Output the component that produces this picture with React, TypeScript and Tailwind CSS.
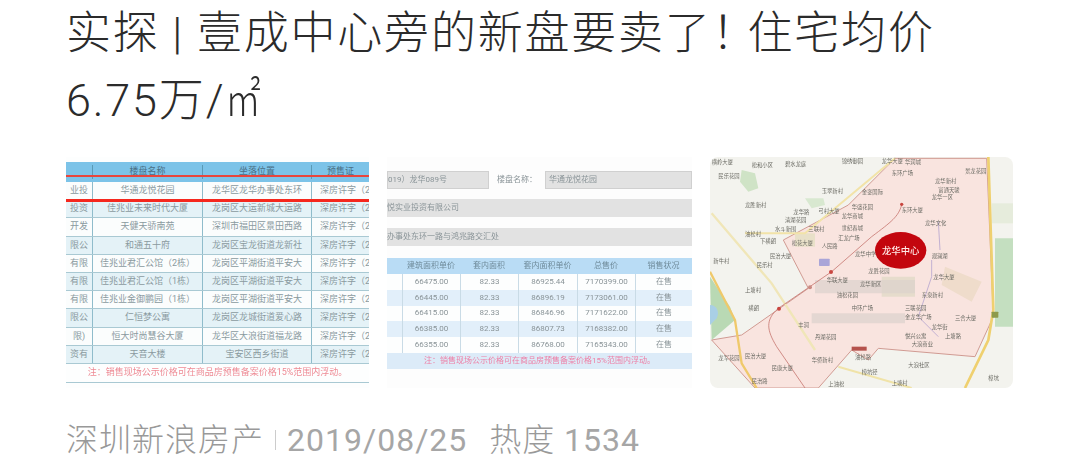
// 資訊カード: タイトル + サムネイル3枚 + メタ行

const SANS = "font-['Roboto','Noto_Sans_CJK_SC',sans-serif]";

const LISTING_ROWS = [
  ["业投", "华通龙悦花园", "龙华区龙华办事处东环"],
  ["投资", "佳兆业未来时代大厦", "龙岗区大运新城大运路"],
  ["开发", "天健天骄南苑", "深圳市福田区景田西路"],
  ["限公", "和通五十府", "龙岗区宝龙街道龙新社"],
  ["有限", "佳兆业君汇公馆（2栋）", "龙岗区平湖街道平安大"],
  ["有限", "佳兆业君汇公馆（1栋）", "龙岗区平湖街道平安大"],
  ["有限", "佳兆业金御鹏园（1栋）", "龙岗区平湖街道平安大"],
  ["限公", "仁恒梦公寓", "龙岗区龙城街道爱心路"],
  ["限)", "恒大时尚慧谷大厦", "龙华区大浪街道福龙路"],
  ["资有", "天音大楼", "宝安区西乡街道"],
];

const PRICE_ROWS = [
  ["66475.00", "82.33", "86925.44", "7170399.00", "在售"],
  ["66445.00", "82.33", "86896.19", "7173061.00", "在售"],
  ["66415.00", "82.33", "86846.96", "7171622.00", "在售"],
  ["66385.00", "82.33", "86807.73", "7168382.00", "在售"],
  ["66355.00", "82.33", "86768.00", "7165343.00", "在售"],
];

const MAP_LABELS: [number, number, string][] = [
  [20, 42, "横岭大厦"], [140, 50, "松和小区"], [240, 48, "碧水龙庭"], [410, 40, "锦绣御园"], [530, 40, "龙华大厦"],
  [600, 42, "华润城"], [560, 75, "东环广场"], [690, 100, "龙华新村"], [780, 68, "景龙花园"], [40, 85, "民乐花园"],
  [700, 125, "富通天骏"], [470, 133, "金銮国际"], [350, 128, "玉翠新村"], [680, 148, "龙华一区"], [120, 170, "龙胜新村"],
  [590, 185, "东环大厦"], [440, 178, "华盛花园"], [265, 192, "龙华路"], [340, 190, "弓村大厦"], [410, 205, "龙华商城"],
  [240, 215, "清湖花园"], [660, 225, "龙华文化"], [410, 240, "世纪春城"], [210, 243, "水斗新围"], [310, 242, "三联村"],
  [120, 258, "油松村"], [400, 270, "汇龙广场"], [165, 280, "下横朗"], [260, 285, "松花大厦"], [350, 295, "人民路"],
  [195, 325, "民治大厦"], [450, 318, "龙华中学"], [680, 323, "观澜湖"], [25, 340, "新牛村"], [155, 350, "民乐村"],
  [490, 368, "龙胜花园"], [685, 388, "龙华大厦"], [365, 397, "华联大厦"], [465, 407, "龙华新区"], [120, 425, "上塘村"],
  [395, 442, "油松花园"], [650, 442, "东泉新村"], [130, 480, "横朗"], [440, 480, "中环广场"], [600, 480, "三联花园"],
  [600, 508, "金龙华广场"], [750, 510, "三合大厦"], [680, 537, "龙华街"], [280, 530, "丰润"], [330, 568, "丹湖花园"],
  [600, 565, "悦兴公寓"], [720, 565, "上塘路"], [620, 588, "大浪商业"], [40, 630, "龙军花园"], [120, 625, "民治大厦"],
  [320, 635, "华侨新村"], [450, 628, "油松路"], [610, 650, "大浪社区"], [200, 660, "民康大厦"], [470, 672, "樟坑径"],
  [140, 700, "民治路"], [370, 708, "上油松"], [560, 705, "上塘村"], [850, 690, "樟坑"],
];

function ListingThumb() {
  return (
    <div className="relative h-[231px] w-[303px] shrink-0 overflow-hidden bg-[#fdfefe] pt-[5px]">
      <div className="blur-[0.7px]">
        <div className="grid h-[20px] grid-cols-[26px_110px_109px_58px] items-center bg-[#7cc3e8] text-center text-[9px] text-[#4a6f85]">
          <span />
          <span className="border-l border-[#5a9ab5]">楼盘名称</span>
          <span className="border-l border-[#5a9ab5]">坐落位置</span>
          <span className="whitespace-nowrap border-l border-[#5a9ab5]">预售证</span>
        </div>
        {LISTING_ROWS.map((row, i) => (
          <div
            key={row[1]}
            className={`grid h-[18.2px] grid-cols-[26px_110px_109px_58px] items-center border-b border-[#a9c9d3] text-center text-[9px] leading-none text-[#8a9a9f] ${i % 2 === 1 ? "bg-[#e4f2f7]" : "bg-[#fbfdfd]"}`}
          >
            <span className="whitespace-nowrap">{row[0]}</span>
            <span className="h-full whitespace-nowrap border-l border-[#8fbccb] pt-[4px]">{row[1]}</span>
            <span className="h-full whitespace-nowrap border-l border-[#8fbccb] pt-[4px]">{row[2]}</span>
            <span className="h-full overflow-hidden whitespace-nowrap border-l border-[#8fbccb] pt-[4px] pl-[8px] text-left">深房许字（2</span>
          </div>
        ))}
        <div className="flex h-[19px] items-center justify-center border-b border-[#a9c9d3] text-[9px] text-[#ee8a94]">
          注：销售现场公示价格可在商品房预售备案价格15%范围内浮动。
        </div>
      </div>
      <div className="absolute inset-x-0 top-[18px] h-[2px] bg-[#e8453c] blur-[0.4px]" />
      <div className="absolute inset-x-0 top-[42px] h-[3px] bg-[#f5281e] blur-[0.3px]" />
    </div>
  );
}

function PriceThumb() {
  return (
    <div className="h-[231px] w-[305px] shrink-0 overflow-hidden bg-[#fdfdfd] pt-[14px] text-[8px] text-[#8a9498]">
      <div className="blur-[0.7px]">
        <div className="flex h-[18px] items-center">
          <div className="flex h-full w-[102px] items-center border border-[#d0d0d0] bg-[#e2e2e2]">019）龙华089号</div>
          <div className="w-[56px] text-center">楼盘名称：</div>
          <div className="flex h-full flex-1 items-center border border-[#d0d0d0] bg-[#e2e2e2] pl-[3px]">华通龙悦花园</div>
        </div>
        <div className="mt-[10px] flex h-[18px] items-center bg-[#e2e2e2]">悦实业投资有限公司</div>
        <div className="mt-[11px] flex h-[18px] items-center bg-[#e2e2e2]">办事处东环一路与鸿兆路交汇处</div>
        <div className="mt-[12px] grid h-[16px] grid-cols-[15px_58px_58px_59px_58px_57px] items-center bg-[#b9dcf5] text-center text-[#6f8b9a]">
          <span />
          <span>建筑面积单价</span>
          <span>套内面积</span>
          <span>套内面积单价</span>
          <span>总售价</span>
          <span>销售状况</span>
        </div>
        {PRICE_ROWS.map((row, i) => (
          <div
            key={row[0]}
            className={`grid h-[15.8px] grid-cols-[15px_58px_58px_59px_58px_57px] items-center text-center ${i % 2 === 1 ? "bg-[#e2effa]" : "bg-[#fdfefe]"}`}
          >
            <span />
            {row.map((cell, j) => (
              <span key={j} className="flex h-full items-center justify-center border-l border-[#c9dbe6]">{cell}</span>
            ))}
          </div>
        ))}
        <div className="flex h-[16px] items-center justify-center bg-[#dcebf8] text-[#ee7fa5]">
          注：销售现场公示价格可在商品房预售备案价格15%范围内浮动。
        </div>
      </div>
    </div>
  );
}

function MapThumb() {
  return (
    <div className="h-[231px] w-[303px] shrink-0 overflow-hidden rounded-lg bg-[#f3f3ee]">
      <svg viewBox="15 21 909 693" className="block h-full w-full blur-[0.7px]">
        {/* 緑地と水面 */}
        <path d="M110 60l40 10 10 45-30 10-25-30z" fill="#cfe3c6" />
        <path d="M300 145h55l5 20-40 10z" fill="#d8e8d0" />
        <path d="M15 380l60 90 15 40-70 60z" fill="#b9d9b4" />
        <path d="M15 465c20 0 30 20 20 40l-20 20z" fill="#a9cfe6" />
        <path d="M870 265h55v265h-55z" fill="#c4dfc0" />
        <path d="M860 160h64v60h-64z" fill="#e6ecdc" />
        <path d="M780 70h50l-10 40-30 5z" fill="#dfe4c8" />
        {/* 対象エリア */}
        <path
          d="M20 570L110 555L310 415L235 270L430 165L570 25L845 25L865 500L810 620L520 595L490 630L440 600L340 714L150 714Z"
          fill="#f9e4df"
          stroke="#d09a92"
          strokeWidth="3"
        />
        <path d="M270 250h60v40h-60z" fill="#e8e0c8" />
        <path d="M720 350l110 45-30 60-90-50z" fill="#efdccb" />
        <path d="M530 380h100v60h-100z" fill="#e6dccc" />
        {/* 透かし */}
        <path d="M330 390h300v40h-300zM320 490h280v30h-280z" fill="#dcd2cc" opacity="0.7" />
        {/* 道路 */}
        <path d="M850 21L865 480L850 570L780 714" fill="none" stroke="#efd06f" strokeWidth="8" />
        <path d="M15 365L90 510L110 640L155 714" fill="none" stroke="#efc96b" strokeWidth="7" />
        <path d="M20 190L200 400L330 600" fill="none" stroke="#f0e6b8" strokeWidth="7" />
        <path d="M120 250H300L570 25" fill="none" stroke="#f2e3a8" strokeWidth="6" />
        <path d="M400 650L620 714" fill="none" stroke="#f0e3a8" strokeWidth="6" />
        {/* 地下鉄 */}
        <path
          d="M590 165C580 200 560 215 500 260L380 365L220 475C180 510 185 540 215 590L300 714"
          fill="none"
          stroke="#c87a74"
          strokeWidth="2.5"
        />
        <path d="M700 215L705 300M680 330L680 380L640 500L700 560" fill="none" stroke="#b7a6cf" strokeWidth="2.5" />
        <rect x="342" y="326" width="32" height="22" rx="2" fill="#aaa5d8" />
        <circle cx="378" cy="366" r="6" fill="#c9453f" />
        <circle cx="222" cy="476" r="6" fill="#c9453f" />
        <circle cx="590" cy="163" r="5" fill="#c9453f" />
        <circle cx="315" cy="412" r="6" fill="#c98a82" />
        <rect x="440" y="590" width="45" height="12" fill="#b5524c" />
        <rect x="860" y="485" width="20" height="18" rx="2" fill="#8d9a4a" />
        {MAP_LABELS.map(([x, y, label]) => (
          <text key={`${x}-${y}`} x={x} y={y} fontSize="16" fill="#6a6a63" fontFamily="'Noto Sans CJK SC', sans-serif">
            {label}
          </text>
        ))}
        <ellipse cx="587" cy="301" rx="77" ry="55" fill="#c3060e" />
        <text x="587" y="311" fontSize="28" fontWeight="500" textAnchor="middle" fill="#ffe9e6" fontFamily="'Noto Sans CJK SC', sans-serif">
          龙华中心
        </text>
      </svg>
    </div>
  );
}

export default function App() {
  return (
    <div className={`h-[464px] w-[1079px] overflow-hidden bg-white pl-[66px] ${SANS}`}>
      <h1 className="w-[900px] text-[45px] font-light leading-[67px] tracking-[1.8px] text-[#2b2b2b]">
        实探 | 壹成中心旁的新盘要卖了！<span className="-ml-[11px]">住宅均价</span> 6.75万/<span className="inline-block origin-left scale-x-[0.8]">㎡</span>
      </h1>
      <div className="mt-[23px] flex gap-[18px]">
        <ListingThumb />
        <PriceThumb />
        <MapThumb />
      </div>
      <div className="mt-[34px] flex h-[36px] items-center text-[32px] font-light leading-none tracking-[1px] text-[#999999]">
        <span>深圳新浪房产</span>
        <span className="mx-[11px] h-[20px] w-px bg-[#cccccc]" />
        <span className="font-normal text-[#a6a6a6]">2019/08/25</span>
        <span className="ml-[22px]">热度 <span className="font-normal text-[#a6a6a6]">1534</span></span>
      </div>
    </div>
  );
}
